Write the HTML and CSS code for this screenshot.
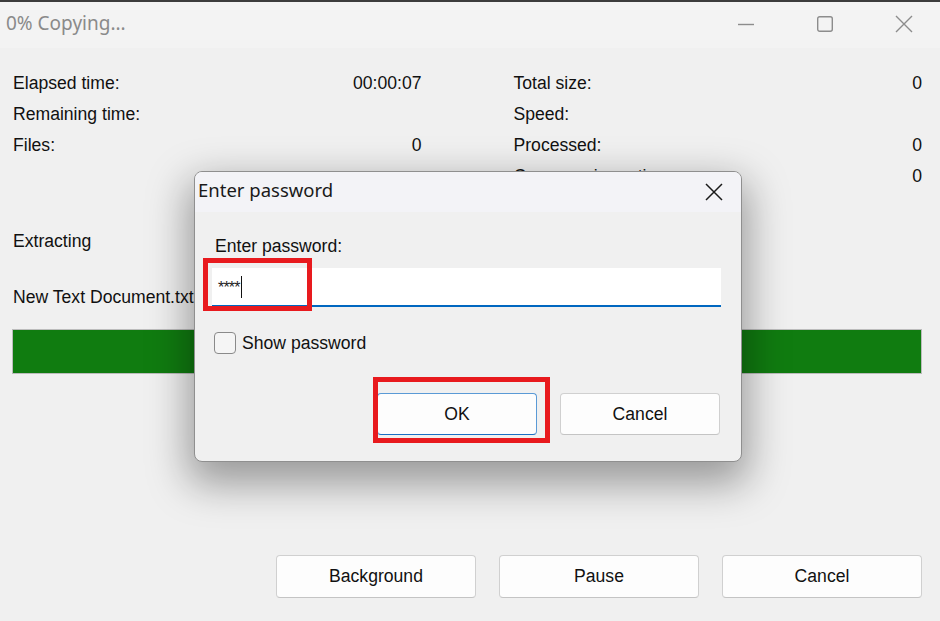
FILE: index.html
```html
<!DOCTYPE html>
<html>
<head>
<meta charset="utf-8">
<link rel="stylesheet" href="styles.css">
</head>
<body>
<div class="window">
  <div class="titlebar">
    <div class="title">0% Copying...</div>
    <div class="controls">
      <span class="ctl"><svg width="18" height="18" viewBox="0 0 18 18"><path d="M1 9.5H17" stroke="#8c8c8c" stroke-width="1.4"/></svg></span>
      <span class="ctl"><svg width="18" height="18" viewBox="0 0 18 18"><rect x="1.7" y="1.7" width="14.6" height="14.6" rx="2" fill="none" stroke="#8c8c8c" stroke-width="1.4"/></svg></span>
      <span class="ctl"><svg width="18" height="18" viewBox="0 0 18 18"><path d="M1 1L17 17M17 1L1 17" stroke="#8c8c8c" stroke-width="1.4"/></svg></span>
    </div>
  </div>
  <div class="content">
    <div class="stats">
      <div class="row"><span>Elapsed time:</span><span>00:00:07</span></div>
      <div class="row"><span>Total size:</span><span>0</span></div>
      <div class="row"><span>Remaining time:</span><span></span></div>
      <div class="row"><span>Speed:</span><span></span></div>
      <div class="row"><span>Files:</span><span>0</span></div>
      <div class="row"><span>Processed:</span><span>0</span></div>
      <div class="row"><span></span><span></span></div>
      <div class="row"><span>Compression ratio:</span><span>0</span></div>
    </div>
    <div class="op">Extracting</div>
    <div class="file">New Text Document.txt</div>
    <div class="progress"><div class="fill"></div></div>
    <div class="actions">
      <button class="btn">Background</button>
      <button class="btn">Pause</button>
      <button class="btn">Cancel</button>
    </div>
  </div>

  <div class="dialog">
    <div class="dlg-title">
      <span>Enter password</span>
      <svg class="dlg-close" width="18" height="18" viewBox="0 0 18 18"><path d="M1 1L17 17M17 1L1 17" stroke="#1a1a1a" stroke-width="1.5"/></svg>
    </div>
    <div class="dlg-body">
      <div class="lbl">Enter password:</div>
      <div class="field"><span class="stars">****</span><span class="caret"></span></div>
      <label class="check"><span class="box"></span><span>Show password</span></label>
      <div class="dlg-actions">
        <button class="btn dbtn primary">OK</button>
        <button class="btn dbtn">Cancel</button>
      </div>
    </div>
  </div>
  <div class="mark mark-field"></div>
  <div class="mark mark-ok"></div>
</div>
</body>
</html>
```
FILE: styles.css
```css
html, body {
  margin: 0;
  padding: 0;
}
body {
  width: 940px;
  height: 621px;
  overflow: hidden;
  background: #f0f0f0;
  font-family: "Liberation Sans", Arial, sans-serif;
  color: #111;
}
.window {
  position: relative;
  width: 940px;
  height: 621px;
  border-top: 2px solid #3c3c3c;
  box-sizing: border-box;
  background: #f0f0f0;
}
.titlebar {
  height: 46px;
  background: #f3f3f3;
  display: flex;
  align-items: center;
  justify-content: space-between;
}
.title {
  font-family: "Noto Sans", "Open Sans", sans-serif;
  font-size: 19px;
  color: #8a8a8a;
  padding-left: 6px;
  margin-top: -4px;
}
.controls {
  display: flex;
  gap: 61px;
  padding-right: 27px;
  margin-top: -3px;
}
.ctl {
  width: 18px;
  height: 18px;
  display: flex;
}
.content {
  padding: 20px 18px 0 13px;
  font-size: 17.6px;
}
.stats {
  display: grid;
  grid-template-columns: 1fr 1fr;
  column-gap: 92px;
}
.row {
  display: flex;
  justify-content: space-between;
  height: 31px;
  line-height: 31px;
}
.op {
  margin-top: 34px;
  line-height: 31px;
}
.file {
  margin-top: 25px;
  line-height: 31px;
}
.progress {
  margin-top: 16px;
  height: 45px;
  border: 1px solid #bcbcbc;
  box-sizing: border-box;
  background: #e6e6e6;
  margin-left: -1px;
}
.fill {
  height: 100%;
  background: #107c10;
}
.actions {
  display: flex;
  justify-content: flex-end;
  gap: 23px;
  margin-top: 181px;
}
.btn {
  font-family: "Liberation Sans", Arial, sans-serif;
  font-size: 17.6px;
  color: #111;
  width: 200px;
  height: 43px;
  background: #fdfdfd;
  border: 1px solid #d0d0d0;
  border-bottom-color: #c4c4c4;
  border-radius: 4px;
  padding: 0;
}
.dialog {
  position: absolute;
  left: 194px;
  top: 169px;
  width: 548px;
  height: 291px;
  box-sizing: border-box;
  border: 1px solid #8f8f8f;
  border-radius: 8px;
  background: #f0f0f0;
  overflow: hidden;
  box-shadow: 0 16px 40px 6px rgba(0, 0, 0, 0.36);
}
.dlg-title {
  height: 40px;
  background: #f3f3f7;
  display: flex;
  align-items: center;
  justify-content: space-between;
  padding: 0 18px 0 3px;
  font-family: "Noto Sans", "Open Sans", sans-serif;
  font-size: 18.5px;
  color: #1a1a1a;
}
.dlg-title span {
  margin-top: -5px;
}
.dlg-close {
  margin-top: 0;
}
.dlg-body {
  padding: 21px 20px 0 17px;
  font-size: 17.6px;
}
.lbl {
  line-height: 26px;
  margin-left: 3px;
}
.field {
  margin-top: 9px;
  height: 39px;
  background: #fff;
  border-bottom: 2px solid #0067c0;
  box-sizing: border-box;
  display: flex;
  align-items: center;
  padding-left: 6px;
}
.stars {
  font-size: 16px;
  letter-spacing: -0.8px;
  color: #222;
  margin-top: 2px;
}
.caret {
  width: 1.5px;
  height: 22px;
  background: #111;
  margin-left: 1px;
}
.check {
  display: flex;
  align-items: center;
  gap: 6px;
  margin-top: 25px;
  margin-left: 2px;
  line-height: 22px;
}
.box {
  width: 20px;
  height: 20px;
  border: 1px solid #8a8a8a;
  border-radius: 4px;
  background: #f5f5f5;
}
.dlg-actions {
  display: flex;
  justify-content: flex-end;
  gap: 23px;
  margin-top: 39px;
  margin-right: 1px;
}
.dbtn {
  width: 160px;
  height: 42px;
}
.primary {
  border-color: #5a9ad6;
  border-bottom-color: #1a6fc4;
}
.mark {
  position: absolute;
  border: 5px solid #e81a1e;
  box-sizing: border-box;
}
.mark-field {
  left: 203px;
  top: 256px;
  width: 109px;
  height: 53px;
}
.mark-ok {
  left: 373px;
  top: 375px;
  width: 177px;
  height: 66px;
}
```
